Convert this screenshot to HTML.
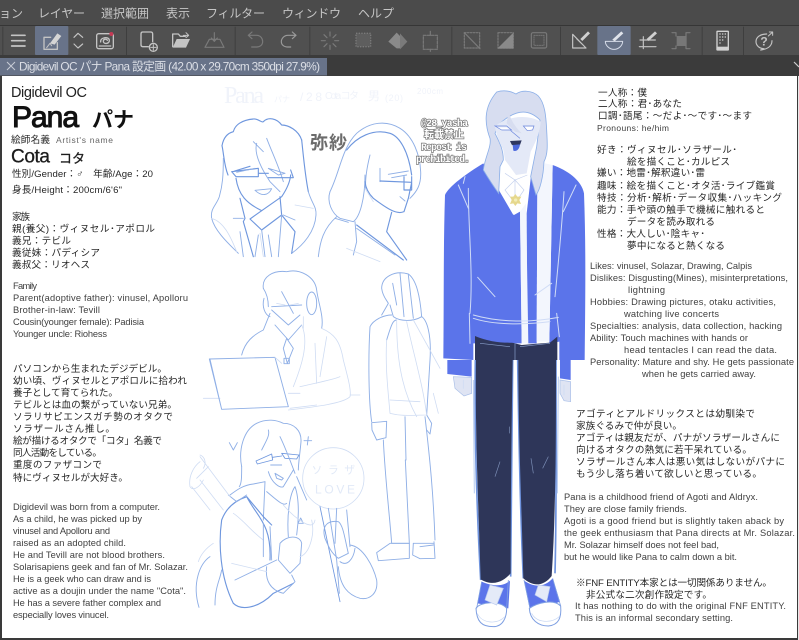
<!DOCTYPE html>
<html lang="ja"><head><meta charset="utf-8"><title>Pana</title>
<style>
html,body{margin:0;padding:0;background:#3a3a3a;width:799px;height:640px;overflow:hidden}
svg{display:block}
text{font-family:"Liberation Sans","Noto Sans CJK JP",sans-serif}
.e{font-size:9.3px;fill:#3f3f3f}
.j{font-size:9.6px;fill:#262626}
.m{font-size:12px;fill:#c6c6c6;font-family:"Noto Sans CJK JP",sans-serif}
.w{font-family:"Liberation Mono","Noto Sans CJK JP",monospace;font-size:10px;font-weight:bold;fill:#fff;stroke:#777;stroke-width:1.4px;paint-order:stroke}
.s{fill:none;stroke:#8fafe6;stroke-width:2.8;stroke-linecap:round;stroke-linejoin:round}
.d{fill:none;stroke:#6f97de;stroke-width:3.4;stroke-linecap:round;stroke-linejoin:round}
.l{fill:none;stroke:#cfdcf3;stroke-width:2.4;stroke-linecap:round;stroke-linejoin:round}
.i{fill:none;stroke:#c4c4c4;stroke-width:4;stroke-linecap:round;stroke-linejoin:round}
.g{fill:none;stroke:#7a7a7a;stroke-width:3.5;stroke-linecap:round;stroke-linejoin:round}
.b1{filter:blur(.35px)}
.b2{filter:blur(.55px)}
</style></head><body>
<svg width="799" height="640" viewBox="0 0 799 640" xmlns="http://www.w3.org/2000/svg">
<rect width="799" height="640" fill="#3a3a3a"/>
<rect width="799" height="25" fill="#4b4b4b"/>
<rect y="25" width="799" height="1" fill="#363636"/>
<rect y="26" width="799" height="29" fill="#505050"/>
<rect y="55" width="799" height="21" fill="#3b3b3b"/>
<g class="b1">
<text class="m" x="-1" y="17.5">ョン</text>
<text class="m" x="38" y="17.5" textLength="47">レイヤー</text>
<text class="m" x="101" y="17.5" textLength="48">選択範囲</text>
<text class="m" x="166" y="17.5" textLength="24">表示</text>
<text class="m" x="206" y="17.5" textLength="59">フィルター</text>
<text class="m" x="282" y="17.5" textLength="59">ウィンドウ</text>
<text class="m" x="358" y="17.5" textLength="36">ヘルプ</text>
</g>

<g transform="scale(.33333)" class="b1">
<rect x="105" y="78" width="100" height="87" rx="3" fill="#687389"/>
<rect x="1792" y="78" width="100" height="87" rx="3" fill="#687389"/>
<g fill="#3e3e3e"><rect x="7" y="80" width="3" height="85"/><rect x="378" y="80" width="3" height="85"/><rect x="704" y="80" width="3" height="85"/><rect x="928" y="80" width="3" height="85"/><rect x="1354" y="80" width="3" height="85"/><rect x="1680" y="80" width="3" height="85"/><rect x="2105" y="80" width="3" height="85"/><rect x="2229" y="80" width="3" height="85"/></g>
<path class="i" style="stroke-width:5" d="M35 106H75M35 122H75M35 138H75"/>
<path class="i" d="M152 112H132V148H172V128"/><path d="M150 130L172 100L184 108L164 134Z" fill="#d5d5d5"/><path class="i" style="stroke-width:3" d="M140 143L150 130L155 137"/>
<path class="i" d="M222 112L234 100L248 112M222 132L234 144L248 132" style="stroke-width:3.5"/>
<rect x="290" y="101" width="50" height="45" rx="6" class="i"/><path class="i" d="M302 126C300 112 326 108 328 120C330 132 310 134 310 124C310 116 320 116 322 121M298 138H332"/><circle cx="334" cy="102" r="6" fill="#c53a55"/>
<path class="i" d="M445 140H428C424 140 423 138 423 134V102C423 98 425 96 428 96H452C456 96 458 98 458 102V125"/><circle cx="460" cy="142" r="12" class="i"/><path class="i" d="M452 142H468M460 134V150" style="stroke-width:3"/>
<path class="i" d="M518 140V102H535L541 109H556"/><path d="M518 143L530 117H570L558 143Z" fill="#c4c4c4"/><path class="i" d="M550 106H566M558 98L566 106L558 113" style="stroke-width:3"/>
<path class="g" d="M615 142L628 118H660L672 142ZM643 98V124M634 114L643 124L652 114"/>
<path class="g" d="M745 106H770C782 106 788 116 788 125C788 135 780 141 770 141H755M756 96L745 106L756 116"/>
<path class="g" d="M888 106H864C852 106 844 116 844 125C844 135 852 141 864 141H872M877 96L888 106L877 116" style="stroke:#9a9a9a"/>
<path class="g" d="M990 96V108M990 136V148M964 122H976M1004 122H1016M972 104L981 113M999 131L1008 140M1008 104L999 113M981 131L972 140"/>
<rect x="1068" y="100" width="44" height="40" fill="#5e5e5e" stroke="#7a7a7a" stroke-width="4" stroke-dasharray="4 4"/>
<path d="M1165 125L1190 98L1200 108V145L1190 145Z" fill="#8a8a8a"/><path d="M1200 100L1222 125L1200 148Z" fill="#7a7a7a"/>
<rect x="1270" y="106" width="42" height="42" class="g" stroke-dasharray="8 4"/><path class="g" d="M1291 94V106M1291 148V154"/>
<rect x="1393" y="98" width="46" height="46" class="g" stroke-dasharray="5 4"/><path class="g" d="M1393 98L1440 146"/>
<rect x="1494" y="98" width="46" height="46" class="g" stroke-dasharray="5 4"/><path d="M1492 146L1540 98V146Z" fill="#8a8a8a"/>
<rect x="1594" y="98" width="46" height="46" rx="5" class="g"/><rect x="1602" y="106" width="30" height="30" class="g" stroke-dasharray="4 3" style="stroke-width:2.5"/>
<path class="i" d="M1718 103V144H1758ZM1730 116L1746 132" style="stroke-width:3.5"/><path d="M1741 117L1764 94L1770 100L1747 123Z" fill="#d0d0d0"/>
<path class="i" d="M1816 124H1868C1868 136 1856 148 1842 148C1828 148 1816 136 1816 124Z" style="stroke:#d5dbe8;stroke-width:3"/><path d="M1837 119L1864 94L1870 100L1844 124Z" fill="#dfe3ea"/>
<path class="i" d="M1920 120H1966M1918 140H1968M1930 110V146" style="stroke-width:3.5"/><path d="M1940 117L1965 94L1971 100L1946 123Z" fill="#d0d0d0"/>
<rect x="2030" y="108" width="30" height="30" fill="#777"/>
<path class="g" d="M2016 98H2028V108M2070 98H2058V108M2016 146H2028V138M2070 146H2058V138"/>
<rect x="2149" y="92" width="38" height="60" rx="3" fill="#d2d2d2"/><rect x="2153" y="96" width="30" height="44" fill="#4f4f4f"/>
<path stroke="#d2d2d2" stroke-width="4" stroke-dasharray="4 4" fill="none" d="M2158 102H2178M2158 111H2178M2158 120H2170M2158 129H2164"/>
<path class="i" d="M2300 102C2280 102 2268 112 2268 125C2268 138 2280 146 2292 146L2282 150C2300 148 2316 140 2316 122" style="stroke-width:3.5"/><text x="2281" y="137" font-size="36" fill="#c4c4c4" font-weight="bold">?</text><path class="i" d="M2305 108L2318 96M2308 96H2318V106" style="stroke-width:3"/>
</g>

<rect y="58" width="327" height="17.5" fill="#687389"/>
<path d="M7 62L15 70M15 62L7 70" stroke="#c8ccd6" stroke-width="1" fill="none"/>
<text x="19" y="70.5" font-size="11.8" fill="#dcdfe6" textLength="301" class="b1">Digidevil OC パナ Pana 設定画 (42.00 x 29.70cm 350dpi 27.9%)</text>
<path d="M794 62L799 67" stroke="#ccc" stroke-width="1.2"/>

<rect x="2" y="76" width="795" height="562" fill="#fff"/>
<rect x="798" y="76" width="1" height="564" fill="#e8e8e8"/>

<g class="b1">
<!-- Left header -->
<text x="11" y="97" font-size="14.5" fill="#222" textLength="76">Digidevil OC</text>
<text x="12" y="127" font-size="30" fill="#111" stroke="#111" stroke-width="1" textLength="67">Pana</text>
<text x="92" y="127" font-size="21" fill="#111" font-weight="bold" textLength="42">パナ</text>
<text class="j" x="11" y="143" textLength="39">絵師名義</text>
<text x="56" y="143" font-size="8.5" fill="#666" textLength="57">Artist's name</text>
<text x="11" y="162.5" font-size="19" fill="#1c1c1c" stroke="#1c1c1c" stroke-width=".3" textLength="39">Cota</text>
<text x="59" y="163" font-size="13" fill="#1c1c1c" stroke="#1c1c1c" stroke-width=".3" textLength="26">コタ</text>
<text class="j" x="12" y="177" textLength="141">性別/Gender：♂　年齢/Age：20</text>
<text class="j" x="12" y="193" textLength="110">身長/Height：200cm/6'6"</text>
<text class="j" x="12" y="220" textLength="18">家族</text>
<text class="j" x="12" y="232" textLength="143">親(養父)：ヴィヌセル･アポロル</text>
<text class="j" x="12" y="244" textLength="59">義兄：テビル</text>
<text class="j" x="12" y="256" textLength="88">義従妹：パディシア</text>
<text class="j" x="12" y="268" textLength="78">義叔父：リオヘス</text>

<text class="e" x="13" y="289" textLength="24">Family</text>
<text class="e" x="13" y="301" textLength="175">Parent(adoptive father): vinusel, Apolloru</text>
<text class="e" x="13" y="313" textLength="87">Brother-in-law: Tevill</text>
<text class="e" x="13" y="325" textLength="131">Cousin(younger female): Padisia</text>
<text class="e" x="13" y="337" textLength="94">Younger uncle: Riohess</text>

<text class="j" x="13" y="372" textLength="154">パソコンから生まれたデジデビル。</text>
<text class="j" x="13" y="384" textLength="174">幼い頃、ヴィヌセルとアポロルに拾われ</text>
<text class="j" x="13" y="396" textLength="105">養子として育てられた。</text>
<text class="j" x="13" y="408" textLength="164">テビルとは血の繋がっていない兄弟。</text>
<text class="j" x="13" y="420" textLength="160">ソラリサピエンスガチ勢のオタクで</text>
<text class="j" x="13" y="432" textLength="102">ソラザールさん推し。</text>
<text class="j" x="13" y="444" textLength="149">絵が描けるオタクで「コタ」名義で</text>
<text class="j" x="13" y="456" textLength="89">同人活動をしている。</text>
<text class="j" x="13" y="468" textLength="89">重度のファザコンで</text>
<text class="j" x="13" y="481" textLength="115">特にヴィヌセルが大好き。</text>

<text class="e" x="13" y="510" textLength="147">Digidevil was born from a computer.</text>
<text class="e" x="13" y="522" textLength="129">As a child, he was picked up by</text>
<text class="e" x="13" y="534" textLength="97">vinusel and Apolloru and</text>
<text class="e" x="13" y="546" textLength="113">raised as an adopted child.</text>
<text class="e" x="13" y="558" textLength="152">He and Tevill are not blood brothers.</text>
<text class="e" x="13" y="570" textLength="175">Solarisapiens geek and fan of Mr. Solazar.</text>
<text class="e" x="13" y="582" textLength="138">He is a geek who can draw and is</text>
<text class="e" x="13" y="594" textLength="173">active as a doujin under the name "Cota".</text>
<text class="e" x="13" y="606" textLength="148">He has a severe father complex and</text>
<text class="e" x="13" y="618" textLength="96">especially loves vinucel.</text>
</g>

<!-- Faint title -->
<g fill="#f0f3fa" class="b1">
<text x="224" y="103" font-size="24" textLength="40" style="font-family:'Liberation Serif',serif">Pana</text>
<text x="274" y="102" font-size="8" textLength="16">パナ</text>
<text x="300" y="101" font-size="12" textLength="22">/28</text>
<text x="325" y="99" font-size="10" textLength="34">Cota コタ</text>
<text x="368" y="100" font-size="12">男</text>
<text x="385" y="101" font-size="9" textLength="18">(20)</text>
<text x="417" y="94" font-size="8" textLength="26">200cm</text>
</g>

<!-- Head sketches -->
<g transform="translate(200,75) scale(.33333)" class="b2">
<path class="d" d="M66 212C70 190 80 175 100 170C105 150 125 135 160 132C175 130 185 145 190 140C205 125 230 130 245 150C265 150 295 165 305 195"/>
<path class="d" d="M66 212C72 240 72 270 84 300M305 195C310 240 315 300 325 350"/>
<path class="s" d="M70 250C70 300 68 330 58 365C50 390 30 400 35 430C45 470 90 510 115 535"/>
<path class="s" d="M325 350C335 385 350 395 348 420C345 470 310 510 275 535"/>
<path class="s" d="M170 205C160 240 190 290 210 320L240 350M200 190C215 230 235 270 250 320M160 200L190 230"/>
<path class="d" d="M108 310C115 360 140 385 185 407L245 365C262 340 270 320 272 300"/>
<path class="d" d="M95 290L175 280L175 305L108 305ZM205 308H280L272 285M175 295H205M104 288L150 274"/>
<path class="s" d="M110 292L165 280M205 280L255 295L235 300Z"/>
<path class="s" d="M165 346L215 341C205 362 185 365 165 346Z"/>
<path class="d" d="M185 407L150 432L185 465L245 420M130 440L160 545M120 370L135 430L130 440M240 365L245 420L285 470L275 535"/>
<path class="s" d="M185 465L195 545M245 420L235 545M100 430H130M250 420L285 435M175 480L165 545M205 480L215 545M120 470L130 545"/>
<path class="l" d="M180 475L190 545M35 430C70 440 90 480 110 530M285 390L340 400"/>
<path class="s" d="M390 350C420 290 425 220 470 175C510 140 560 135 600 160C640 185 660 240 662 290C664 330 650 350 630 370"/>
<path class="d" d="M440 225C470 185 520 160 570 175C600 185 625 230 635 300"/>
<path class="s" d="M390 350C380 380 395 415 420 430L460 440C480 425 495 370 495 300M510 240C500 280 495 310 497 340M540 280V320"/>
<path class="d" d="M540 318L635 322L625 370L612 410C590 420 560 400 520 370C505 355 497 340 495 320M612 305V345H635V305"/>
<path class="s" d="M565 298L625 288M575 308L620 300M600 365L615 378M405 430L445 442"/>
<path class="d" d="M575 412L560 470L620 555M470 450L610 555"/>
<path class="s" d="M410 425C370 460 360 500 355 545M465 440L470 500L460 540M470 460L585 540"/>
<path class="l" d="M440 520L540 560M495 340L520 380"/>
</g>
<text x="310" y="149" font-size="18" font-weight="bold" fill="#6c6c6c" textLength="37" class="b1">弥紗</text>
<g class="b1">
<text class="w" x="421" y="126" textLength="47">@28_yasha</text>
<text class="w" x="424" y="138" textLength="40">転載禁止</text>
<text class="w" x="421" y="150" textLength="46">Repost is</text>
<text class="w" x="416" y="162" textLength="54">prohibited.</text>
</g>

<!-- Lower sketches -->
<g transform="translate(200,260) scale(.33333)" class="b2">
<path class="s" d="M190 85C185 50 220 30 260 35C300 25 345 50 350 90C355 130 372 170 365 205"/>
<path class="s" d="M192 115C185 140 195 165 210 170M190 85C200 100 205 115 205 140"/>
<ellipse class="s" cx="335" cy="130" rx="15" ry="34"/>
<path class="s" d="M215 150L265 195L300 165M215 140L305 135M245 95L280 160"/>
<path class="l" d="M230 130L255 135M270 135L295 130M310 170V205"/>
<path class="s" d="M125 285C135 245 160 225 190 210L210 160M305 195L265 240L225 195"/>
<path class="s" d="M260 235L280 265L262 310L250 265ZM252 295h16v16h-16z"/>
<path class="l" d="M365 205C400 220 420 240 430 300C440 340 455 390 450 410C430 430 350 440 265 450M305 195C330 250 300 330 280 380M300 380C340 370 400 360 420 350M345 250L350 370M380 230L360 350M10 415H60M265 400H300M450 405H480"/>
<path class="s" d="M28 297L225 292L265 440L65 448ZM30 298L65 448"/>
<path class="l" d="M270 445L350 435M225 292L245 310"/>

<path class="s" d="M545 85C545 50 585 30 625 42C650 60 660 110 665 170C640 185 600 185 580 170L570 135M545 85C548 110 560 120 565 130L545 165"/>
<path class="s" d="M600 40L612 170M625 45L640 175M578 70L590 135"/>
<path class="s" d="M510 200C520 180 550 165 575 165M510 200C505 280 505 420 515 485M665 170C680 180 695 220 690 300L680 465M560 240C575 190 580 180 590 180"/>
<path class="s" d="M515 488L560 484L558 533L530 540L516 510ZM680 465L695 490L690 522L680 510"/>
<path class="l" d="M560 240C555 320 565 400 570 460C610 470 640 465 680 465M590 180C590 280 600 380 650 470M620 185C640 280 670 380 680 465M640 180L720 325M700 400L715 460M570 420L660 425"/>
<path class="s" d="M550 540C555 650 570 780 575 850M616 600L628 850M675 470C690 600 700 700 705 840M615 470L618 600M640 850H702M575 850H628"/>
<path class="s" d="M530 878L570 850L628 850L628 895L535 902ZM640 850L638 885L660 896L705 895L702 845M660 860L700 855"/>

<path class="s" d="M125 620C115 570 130 510 170 490C200 475 230 480 250 490C280 490 305 510 303 545C300 580 295 610 295 630"/>
<path class="d" d="M168 603L215 582L218 600L172 612ZM245 580L297 585L290 597L255 595ZM218 592L245 588" style="stroke-width:2.6"/>
<path class="s" d="M185 570C200 540 210 525 205 510M240 530C255 560 270 600 285 640M205 635C215 670 240 685 250 680L280 630"/>
<path class="s" d="M225 640L250 655L245 660L230 655ZM212 615H245"/>
<path class="s" d="M125 620C125 650 125 670 118 680M195 665L190 780M200 695C230 720 250 740 260 730"/>
<path class="s" d="M88 548L100 570L112 548M325 530L322 555M312 542H335"/>
<circle class="l" cx="400" cy="655" r="92"/>
<text x="335" y="640" font-size="32" fill="#e1e9f7" textLength="130">ソラザ</text>
<text x="345" y="700" font-size="36" fill="#e1e9f7" textLength="120">LOVE</text>
<path class="s" d="M265 830C260 760 270 700 285 680C300 720 295 790 290 825M290 650L320 720M310 790h-16l8 -16z"/>
<path class="d" d="M360 740L420 1025" style="stroke-width:2.6"/>
<path class="s" d="M385 745L410 900L418 1000M410 745L405 850M440 750L450 860"/>
<path class="s" d="M375 835C365 800 380 780 415 785C430 795 435 840 445 880L415 895C395 880 385 860 375 835Z"/>
<path class="s" d="M450 855C490 860 520 920 530 960C535 1000 510 1020 480 1015C445 1005 420 980 415 920M465 865C460 900 440 920 420 905"/>
<path class="d" d="M65 780C80 740 110 720 140 710L190 770L215 795M140 710C170 770 215 790 210 900M65 780C55 850 60 950 100 1030C120 1050 170 1050 220 1000L280 970"/>
<path class="s" d="M90 705C110 690 130 675 160 672L195 665M85 705L110 725L140 705"/>
<path class="s" d="M240 850C260 825 300 825 305 850L300 910L270 940L235 900ZM200 920C195 960 210 990 250 1000L285 965L275 945M230 900L105 960M45 1035C45 980 60 960 65 930"/>
<path class="l" d="M95 910L200 935M100 760C130 780 160 820 190 840M250 735C280 770 340 820 345 780M335 780C345 820 330 880 300 890"/>
<path class="l" d="M0 590L90 710M0 660L70 750M0 585C15 590 20 610 10 625M40 850C10 870 0 890 -5 905"/>
<path class="s" d="M190 790L190 890M210 800L215 900"/>
</g>

<g transform="translate(0,270) scale(.33333)" class="b2">
<path class="l" d="M600 575C580 590 565 620 570 650C580 665 600 650 610 630M625 590L590 625M575 650L630 720"/>
<path class="s" d="M630 860C600 880 575 940 597 1012"/>
</g>

<!-- Main figure -->
<g class="b1">
<g transform="translate(440,80) scale(.33333)">
<path fill="#5b74ea" d="M15 345C25 320 80 280 130 250L220 405L240 380L245 790H100V840L10 835C12 650 10 500 15 345Z"/>
<path fill="#5b74ea" d="M260 400L275 270L292 330L290 790L262 790Z"/>
<path fill="#5b74ea" d="M338 255C380 270 425 300 432 340C438 500 436 650 434 840H358V785L328 790Z"/>
<path fill="#f3f6fd" d="M315 250L338 255L328 785L290 785L292 340Z"/>
<path fill="#f3f6fd" d="M240 395L258 370L265 790H245Z"/>
<path fill="#fff" d="M180 250L215 280L275 245L262 340L240 395L222 405L185 320Z"/>
<path fill="#d7ddf0" stroke="#8db0e8" stroke-width="2.5" d="M170 36C195 28 215 35 228 42C245 30 275 30 295 48C315 70 318 110 320 150C322 190 325 220 312 245C310 290 300 330 288 345L272 290L290 200L300 120C260 80 220 95 180 130L165 160C180 190 190 210 190 240L180 260L176 340C165 325 145 295 130 270C135 230 155 200 150 175C135 135 128 85 170 36Z"/>
<path fill="#e4e9f7" d="M165 140C195 110 260 100 302 125C300 160 285 190 272 215L260 280L228 285L195 240L190 210C180 190 170 170 165 140Z"/>
<path fill="#d7ddf0" d="M205 95C215 125 225 140 245 160L225 155L200 130Z"/>
<path fill="#fff" d="M170 142H200L208 148L185 152ZM252 140H280L275 150L262 152Z"/>
<path fill="none" stroke="#6a85dd" stroke-width="2" d="M165 138H200L215 150H185ZM250 138H282L278 150L262 152ZM212 152L240 175"/>
<path fill="#2f3760" d="M210 183L245 181L240 195L222 198L215 194Z"/>
<path fill="#4d69dd" d="M218 195L240 193C238 210 228 215 220 212Z"/>
<path fill="none" stroke="#c4d0ed" stroke-width="2" d="M195 280L225 300L262 285M225 300L195 330L225 370L252 330ZM225 300V345"/>
<path fill="#e6d88d" d="M226 342L232 350L244 350L238 360L243 372L232 370L226 378L220 370L210 372L215 360L210 350L220 350Z"/>
<circle cx="227" cy="360" r="5" fill="#f3eeb8"/>
<g fill="none" stroke="#d0dcf6" stroke-width="3" stroke-linecap="round">
<path d="M55 315L85 385M85 325C85 450 100 580 90 700M75 290L70 310M408 315L370 395M372 335C365 450 355 550 345 650M113 592L165 650M285 645L335 610M100 705C170 725 260 730 355 712M100 715C160 735 250 735 330 725M88 700L90 790M350 700L358 770"/>
</g>
<path fill="#2e3659" d="M105 768C170 795 215 785 225 790L245 795L330 788L352 770V840H105Z"/>
<path fill="none" stroke="#8ba0cc" stroke-width="2" d="M120 790L210 800M225 790V840M240 800L330 790"/>
</g>
<g transform="translate(440,360) scale(.33333)">
<path fill="#5b74ea" d="M22 0H95V50L22 42ZM360 0H392V60L360 55Z"/>
<path fill="#dfe4f3" stroke="#a9bfe8" stroke-width="2" d="M40 50L95 52L95 100L72 108L45 85ZM360 60L392 65V125L372 122L360 100Z"/>
<path class="l" d="M70 60V85M372 75V105"/>
<path fill="none" stroke="#6e93de" stroke-width="5" d="M106 0C104 150 105 350 122 660M218 0L212 650M233 0C236 200 240 450 250 655M348 0C348 250 350 450 345 640"/>
<path fill="none" stroke="#b7cbef" stroke-width="3" d="M100 60L103 400M355 50L352 400"/>
<path fill="#2e3659" d="M108 0H218C214 220 212 450 212 640C190 665 160 680 122 658C115 430 105 220 108 0ZM235 0H348C348 220 348 450 335 648C310 680 280 680 250 655C245 450 235 220 235 0Z"/>
<path fill="none" stroke="#7d90b8" stroke-width="2" d="M208 200V220M180 305L165 350M273 295L280 340M325 290L308 325"/>
<path fill="#5b74ea" d="M125 665C160 680 190 680 210 662L205 745L112 730Z"/>
<path fill="#5b74ea" d="M252 662C285 685 315 680 338 655L360 725L272 760Z"/>
<path fill="#fff" stroke="#7e9fe2" stroke-width="3" d="M108 745C120 725 180 720 200 745C200 770 190 800 160 800C125 800 110 785 108 745Z"/>
<path fill="#fff" stroke="#7e9fe2" stroke-width="3" d="M268 745C290 730 340 715 362 738C365 775 355 795 325 798C295 798 270 780 268 745Z"/>
<path fill="#e4eaf8" stroke="#b8c9ee" stroke-width="2" d="M150 675L190 685L170 735L135 720ZM295 675L330 680L320 725L285 705Z"/>
<path fill="none" stroke="#7e9fe2" stroke-width="2.5" d="M125 665L110 745M205 660L200 745M252 660L270 745M338 655L362 738"/>
<path fill="none" stroke="#c5d5f3" stroke-width="2" d="M112 760C125 790 170 795 195 770M275 760C290 790 335 790 358 770"/>
</g>
</g>

<!-- Right column -->
<g class="b1">
<text class="j" x="598" y="96" textLength="49">一人称：僕</text>
<text class="j" x="598" y="107" textLength="84">二人称：君･あなた</text>
<text class="j" x="598" y="119" textLength="154">口調･語尾：～だよ･～です･～ます</text>
<text class="e" x="597" y="131" textLength="72" style="font-size:8.5px">Pronouns: he/him</text>
<text class="j" x="597" y="153" textLength="140">好き：ヴィヌセル･ソラザール･</text>
<text class="j" x="627" y="165" textLength="103">絵を描くこと･カルピス</text>
<text class="j" x="597" y="176" textLength="108">嫌い：地雷･解釈違い･雷</text>
<text class="j" x="597" y="189" textLength="178">趣味：絵を描くこと･オタ活･ライブ鑑賞</text>
<text class="j" x="597" y="201" textLength="185">特技：分析･解析･データ収集･ハッキング</text>
<text class="j" x="597" y="213" textLength="168">能力：手や頭の触手で機械に触れると</text>
<text class="j" x="627" y="225" textLength="88">データを読み取れる</text>
<text class="j" x="597" y="237" textLength="108">性格：大人しい･陰キャ･</text>
<text class="j" x="627" y="249" textLength="98">夢中になると熱くなる</text>

<text class="e" x="590" y="269" textLength="162">Likes: vinusel, Solazar, Drawing, Calpis</text>
<text class="e" x="590" y="281" textLength="198">Dislikes: Disgusting(Mines), misinterpretations,</text>
<text class="e" x="628" y="293" textLength="37">lightning</text>
<text class="e" x="590" y="305" textLength="186">Hobbies: Drawing pictures, otaku activities,</text>
<text class="e" x="624" y="317" textLength="95">watching live concerts</text>
<text class="e" x="590" y="329" textLength="192">Specialties: analysis, data collection, hacking</text>
<text class="e" x="590" y="341" textLength="158">Ability: Touch machines with hands or</text>
<text class="e" x="624" y="353" textLength="153">head tentacles I can read the data.</text>
<text class="e" x="590" y="365" textLength="204">Personality: Mature and shy. He gets passionate</text>
<text class="e" x="642" y="377" textLength="114">when he gets carried away.</text>

<text class="j" x="576" y="417" textLength="179">アゴティとアルドリックスとは幼馴染で</text>
<text class="j" x="576" y="429" textLength="106">家族ぐるみで仲が良い。</text>
<text class="j" x="576" y="441" textLength="204">アゴティは親友だが、パナがソラザールさんに</text>
<text class="j" x="576" y="453" textLength="176">向けるオタクの熱気に若干呆れている。</text>
<text class="j" x="576" y="465" textLength="209">ソラザールさん本人は悪い気はしないがパナに</text>
<text class="j" x="576" y="477" textLength="186">もう少し落ち着いて欲しいと思っている。</text>

<text class="e" x="564" y="500" textLength="194">Pana is a childhood friend of Agoti and Aldryx.</text>
<text class="e" x="564" y="512" textLength="123">They are close family friends.</text>
<text class="e" x="564" y="524" textLength="220">Agoti is a good friend but is slightly taken aback by</text>
<text class="e" x="564" y="536" textLength="231">the geek enthusiasm that Pana directs at Mr. Solazar.</text>
<text class="e" x="564" y="548" textLength="155">Mr. Solazar himself does not feel bad,</text>
<text class="e" x="564" y="560" textLength="173">but he would like Pana to calm down a bit.</text>

<text class="j" x="576" y="586" textLength="196">※FNF ENTITY本家とは一切関係ありません。</text>
<text class="j" x="586" y="598" textLength="126">非公式な二次創作設定です。</text>
<text class="e" x="575" y="609" textLength="211">It has nothing to do with the original FNF ENTITY.</text>
<text class="e" x="575" y="621" textLength="158">This is an informal secondary setting.</text>
</g>
</svg>
</body></html>
